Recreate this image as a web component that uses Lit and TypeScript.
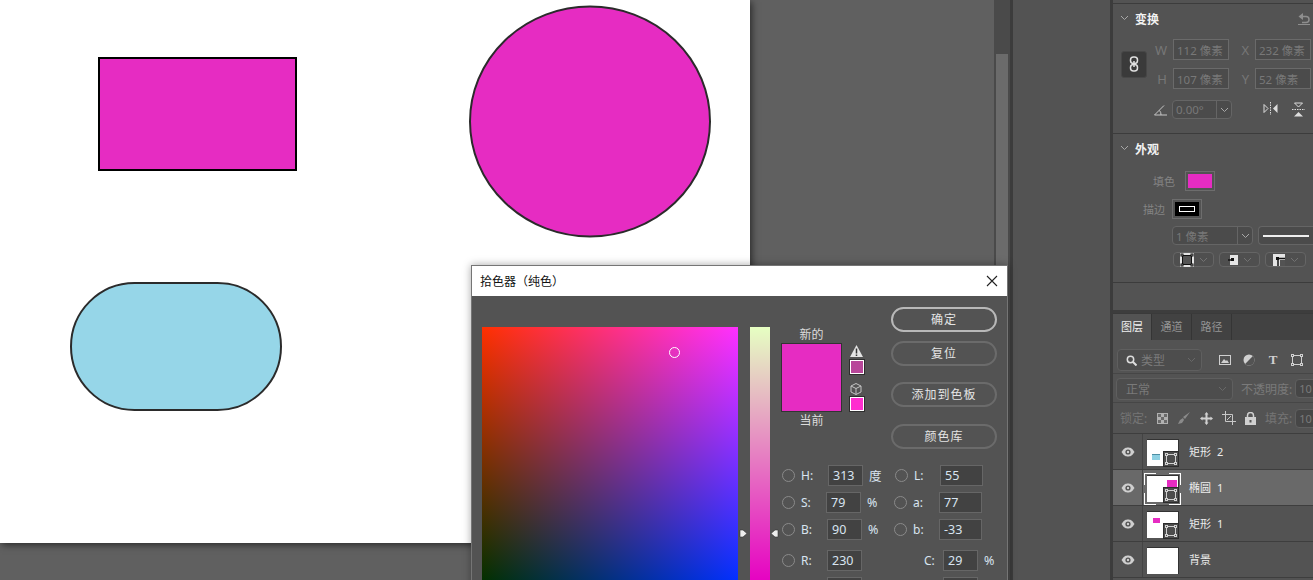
import { LitElement, html, css, svg } from "lit";
import { customElement } from "lit/decorators.js";

const smart = svg`<rect x="2.500" y="2.500" width="9" height="9" fill="none" stroke="#d0d0d0"/><g fill="#4a4a4a" stroke="#d0d0d0"><rect x="1.500" y="1.500" width="2" height="2"/><rect x="10.500" y="1.500" width="2" height="2"/><rect x="1.500" y="10.500" width="2" height="2"/><rect x="10.500" y="10.500" width="2" height="2"/></g>`;
const chevron = html`<svg class="chev" width="9" height="6" viewBox="0 0 9 6"><path d="M1 1l3.500 3.500L8 1" fill="none" stroke="#a8a8a8"/></svg>`;
const eye = html`<svg width="14" height="10" viewBox="0 0 14 10"><path d="M0.500 5C3 1 5 0.500 7 0.500S11 1 13.500 5C11 9 9 9.500 7 9.500S3 9 0.500 5Z" fill="#cfcfcf"/><circle cx="7" cy="5" r="2.600" fill="#535353"/><circle cx="7" cy="5" r="1.200" fill="#cfcfcf"/></svg>`;

type Layer = { name: string; num: string; mini?: string; selected?: boolean; badge: boolean };
const layers: Layer[] = [
  { name: "矩形", num: "2", mini: "m-blue", badge: true },
  { name: "椭圆", num: "1", mini: "m-ell", selected: true, badge: true },
  { name: "矩形", num: "1", mini: "m-rect", badge: true },
  { name: "背景", num: "", badge: false },
];
const vals = [
  { r: "H:", v: "313", u: "度", ml: 0, r2: "L:", v2: "55" },
  { r: "S:", v: "79", u: "%", ml: -2, r2: "a:", v2: "77" },
  { r: "B:", v: "90", u: "%", ml: -1, r2: "b:", v2: "-33" },
];

@customElement("app-root")
export class AppRoot extends LitElement {
  static styles = css`
    :host { display: block; width: 1313px; height: 580px; position: relative; overflow: hidden; background: #535353;
      font-family: "Noto Sans", "Noto Sans CJK SC", sans-serif; font-size: 12px; color: #d6d6d6; }
    * { box-sizing: border-box; }
    svg { display: block; flex: none; }
    .main { display: flex; height: 580px; }
    .work { width: 1010px; flex: none; display: flex; background: #606060; }
    .stage { flex: 1; position: relative; }
    .canvas { width: 750px; height: 543px; background: #fff; box-shadow: 2px 2px 7px rgba(0,0,0,.55); }
    .scroll { width: 16px; background: #4a4a4a; padding: 54px 2px 0; }
    .thumb { height: 526px; background: #6b6b6b; }
    .gap { width: 103px; flex: none; border-left: 3px solid #3c3c3c; border-right: 3px solid #3c3c3c; background: #535353; }
    .panel { flex: 1; display: flex; flex-direction: column; min-width: 0; }

    .sec { border-top: 1px solid #3c3c3c; }
    .head { height: 30px; display: flex; align-items: center; padding-left: 7px; color: #f2f2f2; font-weight: 700; font-size: 12px; position: relative; }
    .chev { margin-right: 6px; margin-top: -3px; }
    .reset { position: absolute; right: 2px; top: 7px; }
    .tf { height: 130px; margin-top: 3px; }
    .tf-main { display: flex; align-items: center; padding: 5px 0 0 8px; }
    .link { width: 26px; height: 27px; border-radius: 3px; background: #3a3a3a; display: flex; align-items: center; justify-content: center; border: 1px solid #474747; }
    .tf-grid { display: grid; grid-template-columns: 26px 56px 26px 56px; grid-auto-rows: 21px; row-gap: 8px; color: #787878; font-size: 12px; }
    .lab { display: flex; align-items: center; justify-content: flex-end; padding-right: 6px; font-size: 13px; color: #777; }
    .inp { border: 1px solid #6a6a6a; background: #4b4b4b; color: #787878; font-size: 11.500px; display: flex; align-items: center; padding-left: 3px; white-space: nowrap; overflow: hidden; }
    .tf-row { display: flex; align-items: center; padding: 11px 0 0 41px; }
    .sel { border: 1px solid #656565; border-radius: 4px; background: #4b4b4b; color: #787878; display: flex; align-items: center; font-size: 11.500px; }
    .sel .txt { flex: 1; padding-left: 3px; white-space: nowrap; }
    .sel .btn { width: 15px; height: 100%; border-left: 1px solid #656565; display: flex; align-items: center; justify-content: center; }
    .sel .btn .chev { margin: 0; }
    .ang { width: 60px; height: 19px; margin-left: 5px; }
    .flips { display: flex; gap: 14px; margin-left: 31px; }

    .ap { height: 149px; }
    .ap-row { display: flex; align-items: center; font-size: 11px; color: #848484; height: 20px; }
    .sw { width: 30px; height: 20px; border: 1px solid #6d6d6d; padding: 2px; display: flex; }
    .sw span { flex: 1; display: flex; align-items: center; justify-content: center; }
    .r-fill { padding-left: 40px; margin-top: 7px; gap: 10px; }
    .r-stroke { padding-left: 30px; margin-top: 8px; gap: 7px; }
    .r-sel { display: flex; padding: 7px 0 0 59px; gap: 5px; }
    .w1 { width: 81px; height: 19px; flex: none; }
    .w2 { flex: 1; height: 19px; border-right: 0; border-radius: 4px 0 0 4px; padding-left: 4px; }
    .line { width: 46px; height: 2px; background: #efefef; }
    .r-tiny { display: flex; gap: 5px; padding: 7px 0 0 60px; }
    .tiny { width: 41px; height: 15px; justify-content: center; gap: 5px; background: #4f4f4f; }
    .tiny svg.chev { margin: 0; opacity: .4; }

    .strip { flex: 1; background: #535353; border-top: 1px solid #3c3c3c; }
    .tabs { flex: none; height: 27px; display: flex; background: #424242; border-top: 1px solid #3a3a3a; box-shadow: 0 -3px 0 #3d3d3d; color: #959595; font-size: 11px; }
    .tab { width: 40px; display: flex; align-items: center; justify-content: center; border-right: 1px solid #353535; padding-bottom: 3px; }
    .tab.on { background: #535353; color: #f0f0f0; width: 39px; }
    .filter { height: 34px; flex: none; display: flex; align-items: flex-start; padding: 9px 0 0 4px; border-bottom: 1px solid #464646; }
    .fs { width: 85px; height: 22px; background: #4d4d4d; border-color: #5f5f5f; color: #7b7b7b; padding-left: 8px; gap: 4px; font-size: 12px; justify-content: flex-start; }
    .fs .chev { margin: 0 5px 0 auto; opacity: .3; }
    .ficons { display: flex; align-items: center; gap: 12px; margin-left: 17px; height: 22px; }
    .blend { height: 29px; flex: none; display: flex; align-items: center; padding: 1px 0 0 3px; border-bottom: 1px solid #464646; color: #7a7a7a; white-space: nowrap; }
    .bs { width: 117px; height: 22px; padding-left: 9px; background: #4d4d4d; border-color: #5f5f5f; font-size: 12px; color: #7a7a7a; flex: none; }
    .bs .chev { margin: 0 5px 0 auto; opacity: .3; }
    .opa { margin-left: 8px; font-size: 12px; }
    .mini-inp { width: 40px; height: 19px; margin-left: 3px; flex: none; background: #464646; border: 1px solid #5f5f5f; border-radius: 4px; font-size: 11px; padding-left: 3px; display: flex; align-items: center; color: #7a7a7a; }
    .lock { height: 31px; flex: none; display: flex; align-items: center; padding-left: 7px; border-bottom: 1px solid #3e3e3e; color: #757575; white-space: nowrap; }
    .lock-l { width: 37px; flex: none; }
    .licons { display: flex; align-items: center; gap: 9px; margin-right: 9px; }

    .layer { height: 36px; flex: none; display: flex; border-bottom: 1px solid #3e3e3e; }
    .layer.sel2 { background: #696969; }
    .eye { width: 30px; flex: none; display: flex; align-items: center; justify-content: center; border-right: 1px solid #444; }
    .tb { width: 32px; height: 27px; margin: 5px 0 0 4px; background: #fff; border-top: 1px solid #333; border-right: 1px solid #333; position: relative; flex: none; }
    .badge { position: absolute; right: -1px; bottom: -1px; width: 16px; height: 16px; background: #4d4d4d; border: 1px solid #2c2c2c; }
    .mk { position: absolute; }
    .m-blue { left: 5px; top: 14px; width: 8px; height: 6px; background: #8ed0e2; border-top: 1px solid #4d8ea3; }
    .m-ell { left: 20px; top: 4px; width: 10px; height: 7px; background: #e62cc2; }
    .m-rect { left: 6px; top: 6px; width: 7px; height: 5px; background: #e62cc2; }
    .corner { position: absolute; width: 12px; height: 12px; border: 0 solid #fff; }
    .c1 { left: -3px; top: -3px; border-top-width: 1px; border-left-width: 1px; }
    .c2 { right: -3px; top: -3px; border-top-width: 1px; border-right-width: 1px; }
    .c3 { left: -3px; bottom: -3px; border-bottom-width: 1px; border-left-width: 1px; }
    .c4 { right: -3px; bottom: -3px; border-bottom-width: 1px; border-right-width: 1px; }
    .lname { display: flex; align-items: center; margin-left: 10px; font-size: 11px; color: #ececec; gap: 6px; padding-bottom: 1px; }
    .foot { height: 2px; flex: none; }

    .dlg { position: absolute; left: 471px; top: 265px; width: 537px; height: 330px; background: #535353; border: 1px solid #757575; border-bottom: 0; box-shadow: 0 0 8px rgba(0,0,0,.35); }
    .title { height: 30px; background: #fff; color: #111; display: flex; align-items: center; justify-content: space-between; padding: 0 9px 0 8px; font-size: 12px; }
    .dbody { display: flex; padding: 11px 0 0 10px; }
    .field { width: 256px; height: 256px; margin-top: 20px; flex: none; position: relative;
      background: linear-gradient(to right, rgb(0,48,0), rgb(0,48,255)), linear-gradient(to bottom, rgb(255,0,0), rgb(0,0,0)); background-blend-mode: screen; }
    .marker { position: absolute; left: 187px; top: 20px; width: 11px; height: 11px; border-radius: 50%; border: 1px solid #fff; }
    .slider { width: 20px; height: 256px; margin: 20px 0 0 12px; flex: none; position: relative; background: linear-gradient(to bottom, rgb(230,255,194), rgb(230,0,194)); }
    .hl { position: absolute; top: 202px; }
    .hl.l { left: -11px; } .hl.r { left: 20px; }
    .dright { width: 216px; margin-left: 11px; flex: none; }
    .top { display: flex; height: 155px; }
    .preview { width: 110px; padding-top: 20px; flex: none; }
    .lbl { width: 61px; text-align: center; line-height: 16px; font-size: 12px; color: #dcdcdc; }
    .pv-row { display: flex; gap: 8px; }
    .pv { width: 61px; height: 69px; background: #e62cc2; border: 1px solid #333; flex: none; }
    .warn { display: flex; flex-direction: column; align-items: flex-start; padding-top: 2px; }
    .chip { width: 14px; height: 14px; border: 1px solid #fff; outline: 1px solid #2e2e2e; margin: 3px 0 9px; }
    .chip-out { background: #b8479a; } .chip-cur { background: #ff2ecf; margin-bottom: 0; margin-top: 2px; }
    .btns { width: 106px; display: flex; flex-direction: column; }
    .b { height: 25px; border: 2px solid #6b6b6b; border-radius: 13px; display: flex; align-items: center; justify-content: center; letter-spacing: 1px; color: #e4e4e4; flex: none; padding-bottom: 1px; }
    .b.pri { border-color: #b8b8b8; }
    .vals { display: flex; flex-direction: column; }
    .vr { display: flex; height: 27px; align-items: center; position: relative; }
    .vr.mt { margin-top: 4px; }
    .rad { width: 13px; height: 13px; border-radius: 50%; border: 1px solid #8a8a8a; flex: none; margin-left: 1px; }
    .vl { width: 33px; padding-left: 6px; font-size: 12px; color: #d8e4f0; flex: none; }
    .vi { height: 21px; width: 35px; flex: none; background: #424242; border: 1px solid #666; padding-left: 4px; display: flex; align-items: center; font-size: 12.500px; color: #d8e4f0; }
    .vu { width: 32px; padding-left: 6px; flex: none; color: #d8e4f0; font-size: 12.500px; }
    .vi.w { width: 43px; }
    .vl2 { width: 32px; padding-left: 6px; flex: none; color: #d8e4f0; }
    .vc { margin-left: 62px; width: 19px; color: #d8e4f0; flex: none; }
    .ve { margin-left: 81px; width: 0; flex: none; }
  `;

  private row(l: Layer) {
    return html`<div class="layer ${l.selected ? "sel2" : ""}">
      <div class="eye">${eye}</div>
      <div class="tb">
        ${l.mini ? html`<span class="mk ${l.mini}"></span>` : ""}
        ${l.badge ? html`<span class="badge"><svg width="14" height="14" viewBox="0 0 14 14">${smart}</svg></span>` : ""}
        ${l.selected ? html`<i class="corner c1"></i><i class="corner c2"></i><i class="corner c3"></i><i class="corner c4"></i>` : ""}
      </div>
      <div class="lname"><span>${l.name}</span><span>${l.num}</span></div>
    </div>`;
  }

  render() {
    return html`
      <div class="main">
        <div class="work">
          <div class="stage">
            <div class="canvas">
              <svg width="750" height="543" viewBox="0 0 750 543">
                <rect x="99" y="58" width="197" height="112" fill="#e62cc2" stroke="#000" stroke-width="2"/>
                <ellipse cx="590" cy="121.500" rx="120" ry="115" fill="#e62cc2" stroke="#2b2b2b" stroke-width="2"/>
                <rect x="71" y="283" width="210" height="127" rx="63.500" fill="#96d6e8" stroke="#2b2b2b" stroke-width="2"/>
              </svg>
            </div>
          </div>
          <div class="scroll"><div class="thumb"></div></div>
        </div>
        <div class="gap"></div>
        <div class="panel">
          <div class="sec tf">
            <div class="head">${chevron}变换
              <svg class="reset" width="14" height="14" viewBox="0 0 14 14"><path d="M3 5.500h6a3 3 0 0 1 0 6H5" fill="none" stroke="#8e8e8e" stroke-width="1.500"/><path d="M6 2v7L1.500 5.500z" fill="#8e8e8e"/><path d="M1 13.500h12" stroke="#8e8e8e"/></svg>
            </div>
            <div class="tf-main">
              <div class="link"><svg width="10" height="16" viewBox="0 0 10 16"><g fill="none" stroke="#e0e0e0" stroke-width="1.500"><rect x="1.500" y="1" width="7" height="6.500" rx="3"/><rect x="1.500" y="8.500" width="7" height="6.500" rx="3"/><path d="M5 5v6"/></g></svg></div>
              <div class="tf-grid">
                <div class="lab">W</div><div class="inp">112 像素</div><div class="lab">X</div><div class="inp">232 像素</div>
                <div class="lab">H</div><div class="inp">107 像素</div><div class="lab">Y</div><div class="inp">52 像素</div>
              </div>
            </div>
            <div class="tf-row">
              <svg width="13" height="12" viewBox="0 0 13 12"><path d="M0.500 11h12.500M0.500 11L10 1.500M7 11a6 6 0 0 0-1.500-4.500" fill="none" stroke="#c8c8c8"/></svg>
              <div class="sel ang"><span class="txt">0.00°</span><span class="btn">${chevron}</span></div>
              <div class="flips">
                <svg width="15" height="13" viewBox="0 0 15 13"><path d="M1 2.500v8l4-4z" fill="none" stroke="#ddd"/><path d="M14.500 2v9L10 6.500z" fill="#ddd"/><path d="M7.500 0v13" stroke="#ddd" stroke-dasharray="1.500 1"/></svg>
                <svg width="13" height="15" viewBox="0 0 13 15"><path d="M2.500 1h8l-4 4z" fill="none" stroke="#ddd"/><path d="M2 14.500h9L6.500 10z" fill="#ddd"/><path d="M0 7.500h13" stroke="#ddd" stroke-dasharray="1.500 1"/></svg>
              </div>
            </div>
          </div>
          <div class="sec ap">
            <div class="head">${chevron}外观</div>
            <div class="ap-row r-fill"><span>填色</span><div class="sw"><span style="background:#e62cc2"></span></div></div>
            <div class="ap-row r-stroke"><span>描边</span><div class="sw"><span style="background:#000"><svg width="16" height="6" viewBox="0 0 16 6"><rect x=".5" y=".5" width="15" height="5" fill="none" stroke="#fff"/></svg></span></div></div>
            <div class="r-sel">
              <div class="sel w1"><span class="txt">1 像素</span><span class="btn">${chevron}</span></div>
              <div class="sel w2"><span class="line"></span></div>
            </div>
            <div class="r-tiny">
              <div class="sel tiny"><svg width="14" height="14" viewBox="0 0 14 14"><rect width="14" height="14" fill="#e4e4e4"/><rect x="2.500" y="2.500" width="9" height="9" fill="#555" stroke="#111"/><g fill="#e4e4e4" stroke="#111"><rect x="1" y="1" width="2" height="2"/><rect x="11" y="1" width="2" height="2"/><rect x="1" y="11" width="2" height="2"/><rect x="11" y="11" width="2" height="2"/></g></svg>${chevron}</div>
              <div class="sel tiny"><svg width="10" height="10" viewBox="0 0 10 10"><rect x="2" width="8" height="10" fill="#e4e4e4"/><path d="M0 5h5" stroke="#111" stroke-width="1.500"/><rect x="3" y="3" width="3" height="3" fill="#111"/></svg>${chevron}</div>
              <div class="sel tiny"><svg width="12" height="12" viewBox="0 0 12 12"><rect width="12" height="12" fill="#e4e4e4"/><path d="M5 12V4.500h7" fill="none" stroke="#111" stroke-width="1.500"/><rect x="3" y="3" width="3" height="3" fill="#111"/><rect x="7" y="6" width="5" height="6" fill="#535353"/></svg>${chevron}</div>
            </div>
          </div>
          <div class="strip"></div>
          <div class="tabs">
            <div class="tab on">图层</div><div class="tab">通道</div><div class="tab">路径</div>
          </div>
          <div class="filter">
            <div class="sel fs"><svg width="11" height="11" viewBox="0 0 11 11"><circle cx="4.500" cy="4.500" r="3.200" fill="none" stroke="#ddd" stroke-width="1.500"/><path d="M7 7l3.500 3.500" stroke="#ddd" stroke-width="2"/></svg>类型${chevron}</div>
            <div class="ficons">
              <svg width="12" height="10" viewBox="0 0 12 10"><rect x=".5" y=".5" width="11" height="9" fill="none" stroke="#d0d0d0"/><path d="M2 8l3-4 2 2 1-1 2 3z" fill="#d0d0d0"/></svg>
              <svg width="12" height="12" viewBox="0 0 12 12"><circle cx="6" cy="6" r="5.500" fill="#d0d0d0"/><path d="M9.900 2.100A5.500 5.500 0 0 1 2.100 9.900z" fill="#535353"/></svg>
              <span style="font:700 13px 'Liberation Serif',serif;color:#d0d0d0;width:12px;text-align:center">T</span>
              <svg width="12" height="12" viewBox="0 0 12 12"><rect x="1.500" y="1.500" width="9" height="9" fill="none" stroke="#d0d0d0"/><g fill="#535353" stroke="#d0d0d0"><rect x=".5" y=".5" width="2" height="2"/><rect x="9.500" y=".5" width="2" height="2"/><rect x=".5" y="9.500" width="2" height="2"/><rect x="9.500" y="9.500" width="2" height="2"/></g></svg>
            </div>
          </div>
          <div class="blend">
            <div class="sel bs"><span>正常</span>${chevron}</div>
            <span class="opa">不透明度:</span><span class="mini-inp">10</span>
          </div>
          <div class="lock">
            <span class="lock-l">锁定:</span>
            <div class="licons">
              <svg width="11" height="11" viewBox="0 0 11 11"><rect width="11" height="11" fill="#b0b0b0"/><path d="M1 1h3v3H1zM7 1h3v3H7zM4 4h3v3H4zM1 7h3v3H1zM7 7h3v3H7z" fill="#6a6a6a"/></svg>
              <svg width="14" height="14" viewBox="0 0 14 14"><path d="M13 1L6 6l2 2zM6 7l-3 2-2 4 4-1 2-3z" fill="#8a8a8a"/></svg>
              <svg width="13" height="13" viewBox="0 0 13 13"><path d="M6.500 0l2 2.500H7.500v3h3v-1L13 6.500l-2.500 2v-1h-3v3h1l-2 2.500-2-2.500h1v-3h-3v1L0 6.500l2.500-2v1h3v-3h-1z" fill="#d0d0d0"/></svg>
              <svg width="14" height="14" viewBox="0 0 14 14"><path d="M0 3.500h10.500V14M3.500 0v10.500H14" fill="none" stroke="#c8c8c8"/><path d="M9 5l-4 4" stroke="#c8c8c8"/></svg>
              <svg width="11" height="13" viewBox="0 0 11 13"><rect y="5" width="11" height="8" fill="#d0d0d0"/><path d="M2.500 5V3.500a3 3 0 0 1 6 0V5" fill="none" stroke="#d0d0d0" stroke-width="1.500"/><rect x="4.500" y="8" width="2" height="2.500" fill="#555"/></svg>
            </div>
            <span>填充:</span><span class="mini-inp">10</span>
          </div>
          ${layers.map((l) => this.row(l))}
          <div class="foot"></div>
        </div>
      </div>

      <div class="dlg">
        <div class="title"><span>拾色器（纯色）</span>
          <svg width="12" height="12" viewBox="0 0 12 12"><path d="M1 1l10 10M11 1L1 11" stroke="#222" stroke-width="1.100"/></svg>
        </div>
        <div class="dbody">
          <div class="field"><div class="marker"></div></div>
          <div class="slider">
            <svg class="hl l" width="9" height="9" viewBox="0 0 9 9"><path d="M1 1h3l4 3.500L4 8H1z" fill="#eee" stroke="#333" stroke-width=".6"/></svg>
            <svg class="hl r" width="9" height="9" viewBox="0 0 9 9"><path d="M8 1H5L1 4.500 5 8h3z" fill="#eee" stroke="#333" stroke-width=".6"/></svg>
          </div>
          <div class="dright">
            <div class="top">
              <div class="preview">
                <div class="lbl">新的</div>
                <div class="pv-row">
                  <div class="pv"></div>
                  <div class="warn">
                    <svg width="13" height="12" viewBox="0 0 13 12"><path d="M6.500 0L13 12H0z" fill="#e4e4e4"/><path d="M6.500 3.500v5M6.500 9.500v1.500" stroke="#333" stroke-width="1.500"/></svg>
                    <div class="chip chip-out"></div>
                    <svg width="12" height="12" viewBox="0 0 12 12"><path d="M6 .5l5 2.500v6l-5 2.500-5-2.500v-6zM1 3l5 2.500L11 3M6 5.500v6" fill="none" stroke="#c4c4c4"/></svg>
                    <div class="chip chip-cur"></div>
                  </div>
                </div>
                <div class="lbl" style="margin-top:1px">当前</div>
              </div>
              <div class="btns">
                <div class="b pri">确定</div>
                <div class="b" style="margin-top:9px">复位</div>
                <div class="b" style="margin-top:16px">添加到色板</div>
                <div class="b" style="margin-top:17px">颜色库</div>
              </div>
            </div>
            <div class="vals">
              ${vals.map((v) => html`<div class="vr">
                <span class="rad"></span><span class="vl">${v.r}</span>
                <span class="vi" style="margin-left:${v.ml}px">${v.v}</span>
                <span class="vu" style="margin-right:${-v.ml}px">${v.u}</span>
                <span class="rad" style="margin-left:${v.ml === 0 ? 0 : -1}px"></span><span class="vl2">${v.r2}</span>
                <span class="vi w">${v.v2}</span>
              </div>`)}
              <div class="vr mt">
                <span class="rad"></span><span class="vl">R:</span>
                <span class="vi" style="margin-left:-1px">230</span>
                <span class="vc">C:</span>
                <span class="vi">29</span>
                <span class="vu">%</span>
              </div>
              <div class="vr">
                <span class="rad"></span><span class="vl"></span>
                <span class="vi" style="margin-left:-1px"></span>
                <span class="ve"></span>
                <span class="vi"></span>
              </div>
            </div>
          </div>
        </div>
      </div>
    `;
  }
}
